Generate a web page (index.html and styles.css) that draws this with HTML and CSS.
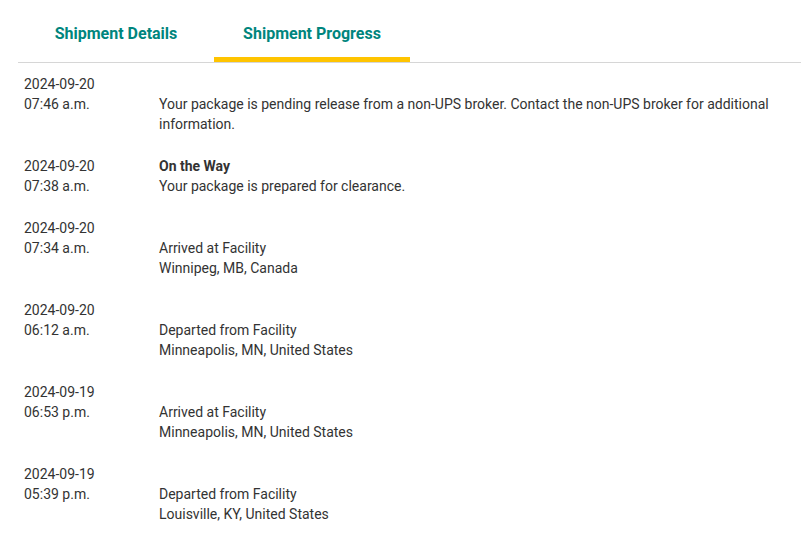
FILE: index.html
```html
<!DOCTYPE html>
<html lang="en">
<head>
    <meta charset="UTF-8">
    <title>Shipment Progress</title>
    <link rel="stylesheet" href="styles.css">
</head>
<body>
    <div id="panel">
        <div class="tabs">
            <div class="tab">Shipment Details</div>
            <div class="tab active">Shipment Progress</div>
        </div>
        <div class="events">
            <div class="event">
                <div class="when">2024-09-20<br>07:46 a.m.</div>
                <div class="what">
                    <div class="status"></div>
                    <div>Your package is pending release from a non-UPS broker. Contact the non-UPS broker for additional information.</div>
                </div>
            </div>
            <div class="event">
                <div class="when">2024-09-20<br>07:38 a.m.</div>
                <div class="what">
                    <div class="status">On the Way</div>
                    <div>Your package is prepared for clearance.</div>
                </div>
            </div>
            <div class="event">
                <div class="when">2024-09-20<br>07:34 a.m.</div>
                <div class="what">
                    <div class="status"></div>
                    <div>Arrived at Facility</div>
                    <div>Winnipeg, MB, Canada</div>
                </div>
            </div>
            <div class="event">
                <div class="when">2024-09-20<br>06:12 a.m.</div>
                <div class="what">
                    <div class="status"></div>
                    <div>Departed from Facility</div>
                    <div>Minneapolis, MN, United States</div>
                </div>
            </div>
            <div class="event">
                <div class="when">2024-09-19<br>06:53 p.m.</div>
                <div class="what">
                    <div class="status"></div>
                    <div>Arrived at Facility</div>
                    <div>Minneapolis, MN, United States</div>
                </div>
            </div>
            <div class="event">
                <div class="when">2024-09-19<br>05:39 p.m.</div>
                <div class="what">
                    <div class="status"></div>
                    <div>Departed from Facility</div>
                    <div>Louisville, KY, United States</div>
                </div>
            </div>
        </div>
    </div>
</body>
</html>
```
FILE: styles.css
```css
body { font-family: Roboto, "Liberation Sans", sans-serif; background: #fff; margin: 0; padding: 0; color: #333; }
#panel { margin: 0 6px 0 18px; }

.tabs {
    display: flex;
    border-bottom: 1px solid #d6d6d6;
}
.tab {
    width: 196px;
    padding: 24px 0 13px;
    line-height: 20px;
    font-size: 16px;
    font-weight: 700;
    color: #00857d;
    text-align: center;
    border-bottom: 5px solid transparent;
}
.tab.active { border-bottom-color: #ffc400; }

.events { padding: 11px 0 0 6px; }
.event {
    display: flex;
    font-size: 14px;
    line-height: 20px;
    margin-bottom: 22px;
}
.when { width: 135px; flex-shrink: 0; }
.what { flex: 1; }
.status { min-height: 20px; font-weight: 700; }
```
